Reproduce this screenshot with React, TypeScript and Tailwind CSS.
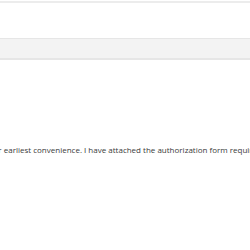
import React from "react";

const App: React.FC = () => {
  return (
    <div className="w-[250px] h-[250px] overflow-hidden bg-white font-['Open_Sans',sans-serif]">
      <div className="h-[1px] bg-white" />
      <div className="h-[2px] bg-[#ececec]" />
      <div className="h-[35px]" />
      <div className="h-[22px] bg-[#f3f3f3] border-t border-b-2 border-[#e6e6e6]" />
      <div className="h-[84px]" />
      <div className="whitespace-nowrap text-[8px] leading-[12px] text-[#3a3a3a] ml-[-75px]">
        Please sign it at your earliest convenience. I have attached the authorization form required for the
        transfer.
      </div>
    </div>
  );
};

export default App;
